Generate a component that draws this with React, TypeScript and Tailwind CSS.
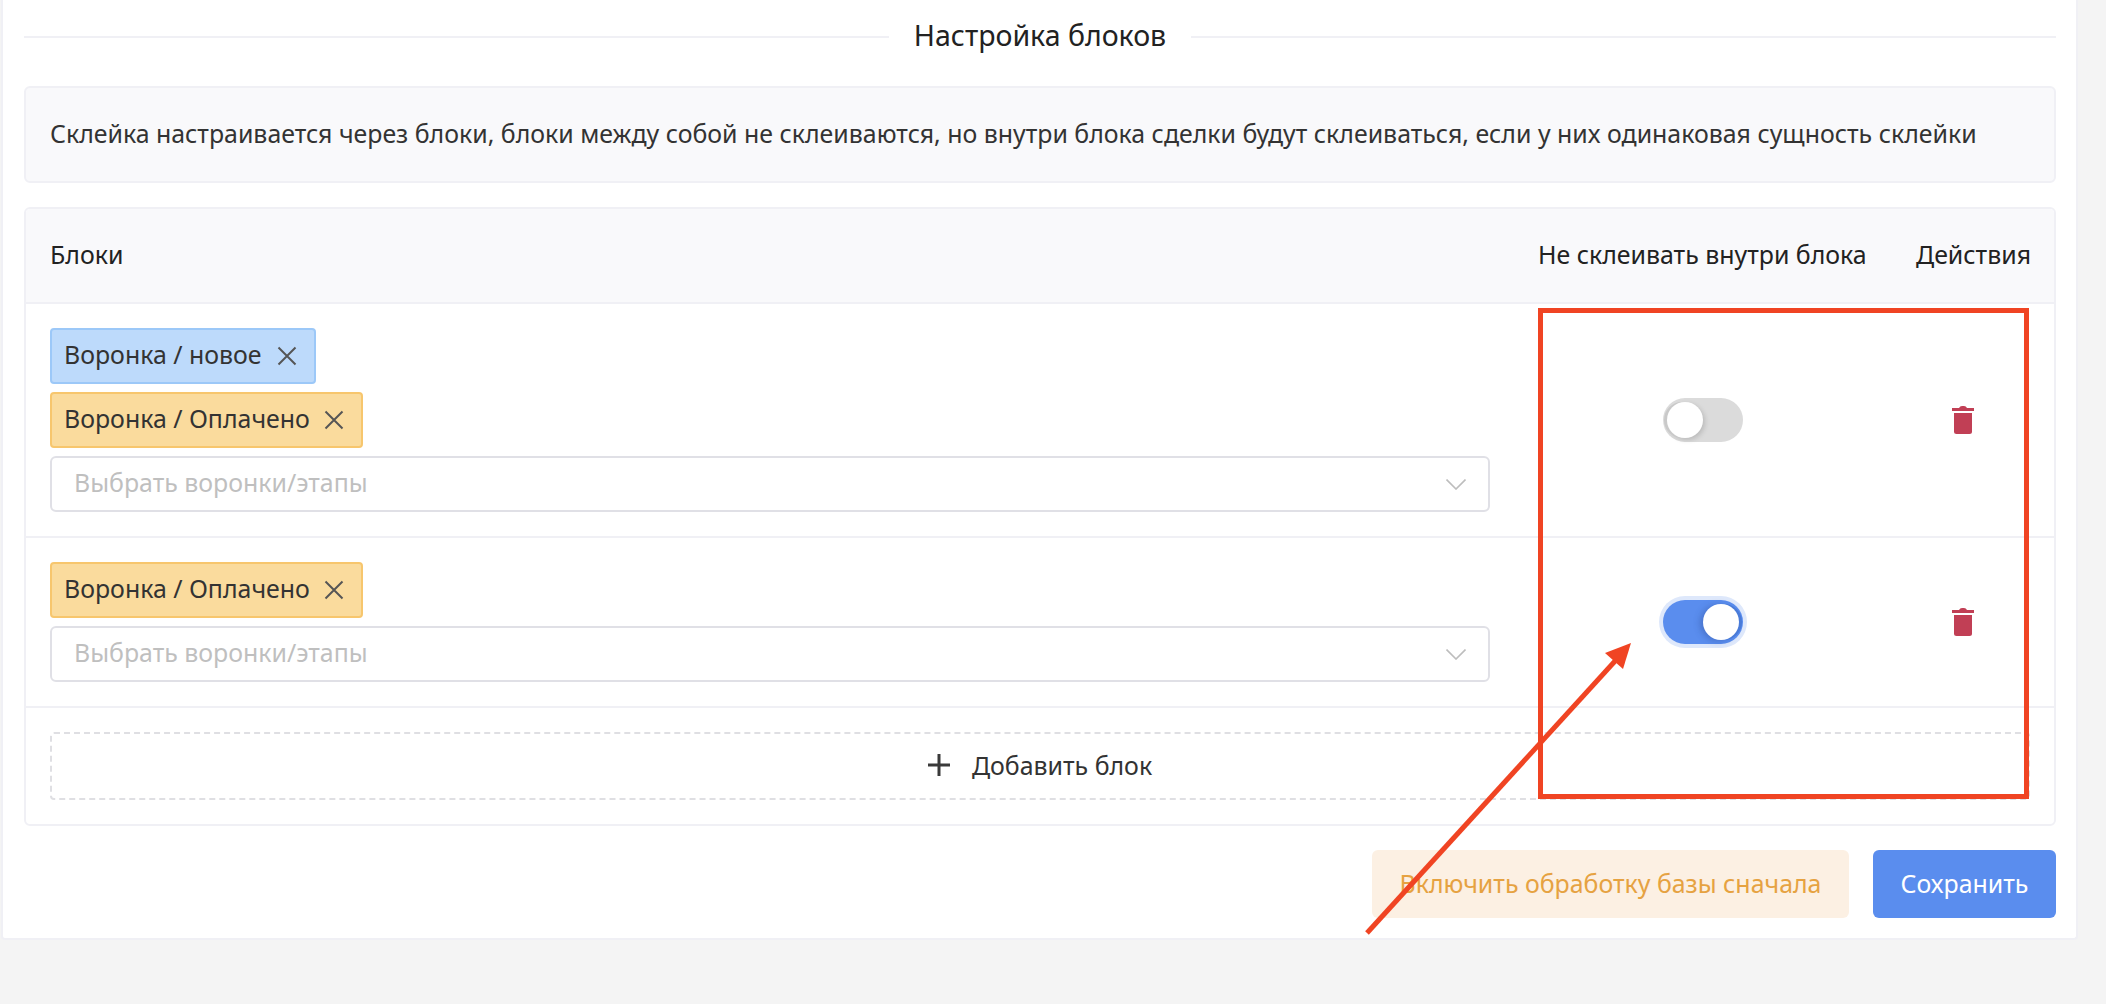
const Close = () => (
  <svg width="20" height="20" viewBox="0 0 20 20" className="shrink-0 text-[#555]" fill="none" stroke="currentColor" strokeWidth="2">
    <path d="M1.5 1.5 18.5 18.5M18.5 1.5 1.5 18.5" />
  </svg>
);

const Trash = () => (
  <svg width="22" height="28" viewBox="0 0 22 28" className="text-[#c13f55]" fill="currentColor">
    <path d="M7 2 Q8 0 10 0 H12 Q14 0 15 2 H22 V5 H0 V2 Z" />
    <path d="M2 7 H20 V25.5 Q20 28 17.5 28 H4.5 Q2 28 2 25.5 Z" />
  </svg>
);

const Tag = ({ text, blue }: { text: string; blue?: boolean }) => (
  <div
    className={`flex h-[56px] items-center justify-between rounded-[4px] border-2 pl-[12px] pr-[17px] ${
      blue ? "w-[266px] border-[#9cc8f8] bg-[#bddafb]" : "w-[313px] border-[#f7c66d] bg-[#fadb9d]"
    }`}
  >
    <span className="whitespace-nowrap pb-[4px]">{text}</span>
    <Close />
  </div>
);

const Select = () => (
  <div className="flex h-[56px] w-full items-center justify-between rounded-[6px] border-2 border-[#e0e0e6] bg-white pl-[22px] pr-[22px]">
    <span className="pb-[4px] text-[#bfbfbf]">Выбрать воронки/этапы</span>
    <svg width="20" height="11" viewBox="0 0 20 11" fill="none" stroke="#bdbdbd" strokeWidth="1.6">
      <path d="M0.5 0.5 10 10 19.5 0.5" />
    </svg>
  </div>
);

const Toggle = ({ on }: { on?: boolean }) => (
  <div
    className={`flex h-[44px] w-[80px] items-center rounded-full ${
      on
        ? "justify-end bg-[#5a8dee] pr-[4px] shadow-[0_0_0_4px_#dee8fb]"
        : "justify-start bg-[#dbdbdb] pl-[4px]"
    }`}
  >
    <div
      className={`h-[36px] w-[36px] rounded-full bg-white ${
        on
          ? "shadow-[3px_0_0_#4a7bd8,-3px_1px_6px_rgba(40,70,140,0.35)]"
          : "shadow-[-3px_0_0_#c9c9c9,2px_2px_5px_rgba(0,0,0,0.15)]"
      }`}
    />
  </div>
);

const Row = ({ tags, on, h }: { tags: { text: string; blue?: boolean }[]; on?: boolean; h: string }) => (
  <div className={`flex border-b-2 border-[#f0f0f5] px-[24px] ${h}`}>
    <div className="flex w-[1440px] flex-col items-start gap-[8px] pt-[24px]">
      {tags.map((t) => (
        <Tag key={t.text} text={t.text} blue={t.blue} />
      ))}
      <Select />
    </div>
    <div className="ml-[48px] flex w-[330px] items-center justify-center">
      <Toggle on={on} />
    </div>
    <div className="ml-[49px] flex w-[113px] items-center pl-[35px]">
      <Trash />
    </div>
  </div>
);

export default function App() {
  return (
    <div className="relative h-[1004px] w-[2106px] overflow-hidden bg-[#f4f4f4] font-['Noto_Sans','Open_Sans',sans-serif] text-[24.9px] leading-[32px] text-[#333]">
      <div className="ml-[1px] h-[940px] w-[2077px] rounded-b-[4px] border-x-2 border-b-2 border-[#f0f0f5] bg-white pl-[21px] pr-[20px]">
        <div className="flex h-[86px] items-start pt-[16px]">
          <div className="mt-[20px] h-[2px] flex-1 bg-[#f0f0f5]" />
          <div className="w-[302px] pb-[2px] text-center text-[28.5px] leading-[38px] text-[#222]">Настройка блоков</div>
          <div className="mt-[20px] h-[2px] flex-1 bg-[#f0f0f5]" />
        </div>
        <div className="flex h-[97px] items-center rounded-[6px] border-2 border-[#f0f0f5] bg-[#f9f9fb] px-[24px] pb-[4px]">
          <span className="whitespace-nowrap">
            Склейка настраивается через блоки, блоки между собой не склеиваются, но внутри блока сделки будут склеиваться, если у них одинаковая сущность склейки
          </span>
        </div>
        <div className="mt-[24px] h-[619px] rounded-[6px] border-2 border-[#f0f0f5]">
          <div className="flex h-[95px] items-center rounded-t-[4px] border-b-2 border-[#f0f0f5] bg-[#f9f9fb] px-[24px] pb-[4px] text-[#222]">
            <div className="w-[1440px]">Блоки</div>
            <div className="ml-[48px] w-[330px] whitespace-nowrap">Не склеивать внутри блока</div>
            <div className="ml-[48px] w-[114px] whitespace-nowrap">Действия</div>
          </div>
          <Row
            h="h-[234px]"
            tags={[{ text: "Воронка / новое", blue: true }, { text: "Воронка / Оплачено" }]}
          />
          <Row h="h-[170px]" on tags={[{ text: "Воронка / Оплачено" }]} />
          <div className="px-[24px] pt-[24px]">
            <div className="flex h-[68px] items-center justify-center gap-[22px] rounded-[4px] border-2 border-dashed border-[#dfdfe3] pb-[2px]">
              <svg width="22" height="22" viewBox="0 0 22 22" stroke="#3a3a3a" strokeWidth="3" fill="none">
                <path d="M11 0V22M0 11H22" />
              </svg>
              <span>Добавить блок</span>
            </div>
          </div>
        </div>
        <div className="mt-[24px] flex justify-end gap-[24px]">
          <div className="flex h-[68px] w-[477px] items-center justify-center rounded-[6px] bg-[#fcf0e3] pb-[3px] text-[#e6a241]">
            Включить обработку базы сначала
          </div>
          <div className="flex h-[68px] w-[183px] items-center justify-center rounded-[6px] bg-[#5a8dee] pb-[3px] text-white">
            Сохранить
          </div>
        </div>
      </div>

      <div className="absolute left-[1538px] top-[308px] h-[491px] w-[491px] border-[5px] border-[#f04423]" />
      <svg className="absolute left-0 top-0" width="2106" height="1004" fill="none">
        <path d="M1367 933 1616 660" stroke="#f04423" strokeWidth="5" />
        <path d="M1631 643 1605 653 1623 669Z" fill="#f04423" />
      </svg>
    </div>
  );
}
